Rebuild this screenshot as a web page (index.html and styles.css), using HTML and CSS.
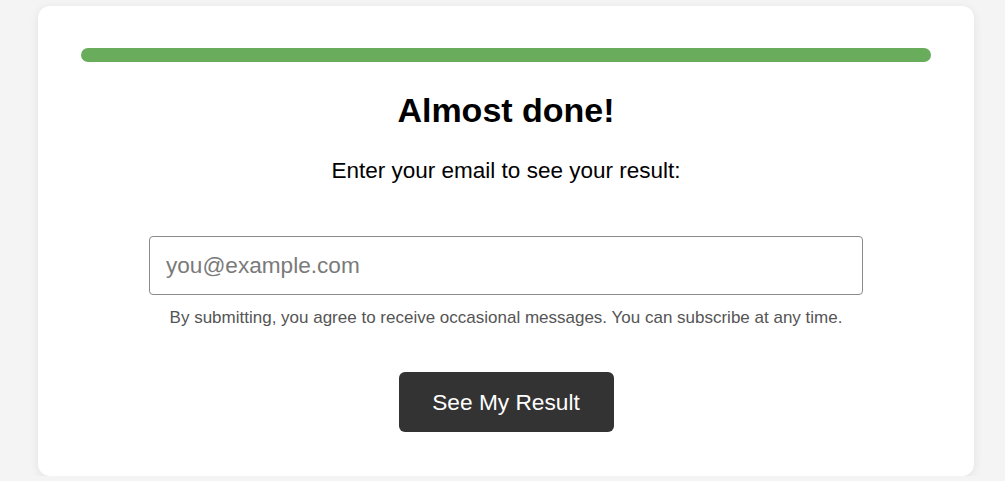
FILE: index.html
```html
<!DOCTYPE html>
<html lang="en">
<head>
<meta charset="utf-8">
<title>Almost done</title>
<link rel="stylesheet" href="styles.css">
</head>
<body>
<main class="card">
  <div class="progress"><div class="progress-fill"></div></div>
  <h1 class="title">Almost done!</h1>
  <p class="subtitle">Enter your email to see your result:</p>
  <form class="form">
    <input class="email" type="email" placeholder="you@example.com">
    <p class="note">By submitting, you agree to receive occasional messages. You can subscribe at any time.</p>
    <button class="submit" type="button">See My Result</button>
  </form>
</main>
</body>
</html>
```

FILE: styles.css
```css
html, body {
  margin: 0;
  padding: 0;
  background: #f4f4f4;
  font-family: "Liberation Sans", Arial, sans-serif;
  color: #000;
}
body {
  padding: 6px 31px 0 38px;
}
.card {
  background: #fff;
  border-radius: 12px;
  box-shadow: 0 2px 10px rgba(0, 0, 0, 0.08);
  padding: 42px 43px 44px;
  text-align: center;
}
.progress {
  height: 14px;
  border-radius: 7px;
  background: #e6e6e6;
  overflow: hidden;
}
.progress-fill {
  height: 100%;
  width: 100%;
  background: #69ad5c;
}
.title {
  font-size: 34px;
  font-weight: bold;
  margin: 28px 0 0;
  line-height: 40px;
}
.subtitle {
  font-size: 22.5px;
  margin: 28px 0 0;
  line-height: 26px;
}
.form {
  display: flex;
  flex-direction: column;
  align-items: center;
  margin-top: 52px;
}
.email {
  box-sizing: border-box;
  width: 714px;
  height: 59px;
  border: 1px solid #8a8a8a;
  border-radius: 4px;
  padding: 0 16px;
  font-family: inherit;
  font-size: 22.6px;
  color: #222;
  outline: none;
}
.email::placeholder {
  color: #7a7a7a;
}
.note {
  font-size: 17px;
  color: #555;
  margin: 12px 0 0;
  line-height: 21px;
}
.submit {
  margin-top: 44px;
  width: 215px;
  height: 60px;
  border: none;
  border-radius: 6px;
  background: #333;
  color: #fff;
  font-family: inherit;
  font-size: 22.7px;
  cursor: pointer;
}
```
